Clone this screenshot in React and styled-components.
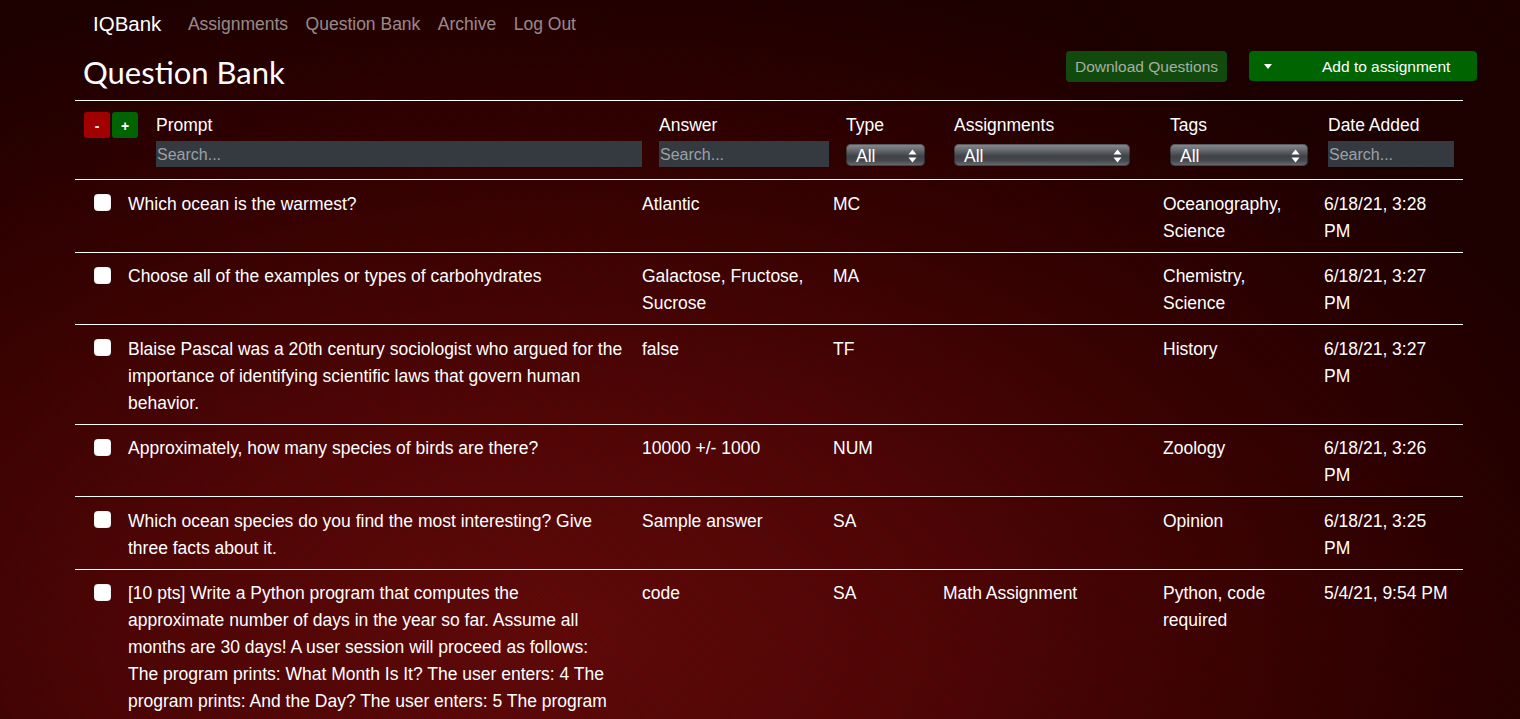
import React from "react";
import styled, { createGlobalStyle } from "styled-components";

const Global = createGlobalStyle`
  html, body { margin: 0; padding: 0; }
  body {
    font-family: "Liberation Sans", Arial, sans-serif;
    color: #fff;
    background-color: #2a0101;
    background-image:
      repeating-linear-gradient(45deg, rgba(0,0,0,0.07) 0px, rgba(0,0,0,0.07) 1px, transparent 1px, transparent 3px),
      radial-gradient(ellipse 75% 95% at 36% 88%, #610909 0%, #500505 35%, #340101 70%, #1d0000 100%);
    background-attachment: fixed;
  }
  #root { height: 719px; overflow: hidden; }
  * { box-sizing: border-box; }
`;

const Page = styled.div`
  padding-left: 75px;
  width: 1477px;
`;

const Nav = styled.nav`
  display: flex;
  align-items: center;
  height: 46px;
  padding-left: 18px;
  padding-top: 2px;
  gap: 17.5px;
`;

const Brand = styled.span`
  font-size: 20.5px;
  color: #fff;
  margin-right: 9px;
`;

const NavLink = styled.a`
  font-size: 17.5px;
  color: rgba(255, 255, 255, 0.55);
  text-decoration: none;
`;

const TitleRow = styled.div`
  display: flex;
  justify-content: space-between;
  align-items: flex-start;
  height: 54px;
`;

const Title = styled.h1`
  margin: 0;
  padding-left: 8px;
  padding-top: 6px;
  font-family: Lato, "Liberation Sans", sans-serif;
  font-weight: 400;
  font-size: 31px;
  line-height: 40px;
`;

const Actions = styled.div`
  display: flex;
  gap: 22px;
  padding-top: 5px;
`;

const Button = styled.button`
  font-family: "Liberation Sans", Arial, sans-serif;
  font-size: 15.5px;
  border: none;
  border-radius: 4px;
  height: ${(p) => (p.$primary ? "30px" : "31px")};
  width: ${(p) => p.$w}px;
  background: ${(p) => (p.$primary ? "#006400" : "#114a0c")};
  color: ${(p) => (p.$primary ? "#fff" : "#a8aea6")};
  display: flex;
  align-items: center;
  justify-content: ${(p) => (p.$primary ? "flex-start" : "center")};
  padding: 1px ${(p) => (p.$primary ? "12px" : "0")} 0;
`;

const Caret = styled.span`
  width: 0;
  height: 0;
  border-left: 4.5px solid transparent;
  border-right: 4.5px solid transparent;
  border-top: 5px solid #fff;
  margin-left: 3px;
  margin-right: 50px;
`;

const HeadRow = styled.div`
  display: grid;
  grid-template-columns: 81px 503px 187px 108px 216px 158px 135px;
  border-top: 1px solid #fff;
  border-bottom: 1px solid #fff;
  padding: 10px 0 12px;
  width: 1388px;
`;

const HeadCell = styled.div`
  display: flex;
  flex-direction: column;
  gap: 3px;
`;

const Label = styled.div`
  font-size: 17.5px;
  line-height: 27px;
  padding-top: 1px;
  height: 27px;
`;

const Control = styled.div`
  height: 26px;
  display: flex;
  align-items: center;
`;

const Search = styled.input`
  width: ${(p) => p.$w}px;
  height: 26px;
  border: none;
  outline: none;
  background: #343a40;
  color: #fff;
  font-family: "Liberation Sans", Arial, sans-serif;
  font-size: 16px;
  padding: 2px 1px 0;
  &::placeholder { color: #9aa0a6; }
`;

const Select = styled.div`
  width: ${(p) => p.$w}px;
  height: 22px;
  margin-top: 2px;
  border-radius: 5px;
  background: linear-gradient(
    to bottom,
    #8a8d91 0%,
    #6a6d71 25%,
    #3f4246 55%,
    #45484c 75%,
    #6b6e72 100%
  );
  box-shadow: inset 0 0 0 1px rgba(0,0,0,0.35);
  display: flex;
  align-items: center;
  justify-content: space-between;
  padding: 2px 8px 0 10px;
  font-size: 17.5px;
  color: #fff;
`;

const Arrows = () => (
  <svg width="9" height="14" viewBox="0 0 9 14">
    <path d="M4.5 0.5 L8.5 5.5 L0.5 5.5 Z" fill="#fff" />
    <path d="M4.5 13.5 L8.5 8.5 L0.5 8.5 Z" fill="#fff" />
  </svg>
);

const ToggleGroup = styled.div`
  display: flex;
  gap: 2px;
  padding-left: 9px;
  padding-top: 1px;
`;

const Toggle = styled.button`
  width: 26px;
  height: 26px;
  border: none;
  border-radius: 3px;
  background: ${(p) => (p.$add ? "#006400" : "#a00000")};
  color: #fff;
  font-family: "Liberation Sans", Arial, sans-serif;
  font-size: 14px;
  font-weight: 700;
  padding: 2px 0 0;
`;

const Row = styled.div`
  display: grid;
  grid-template-columns: 53px 514px 191px 110px 220px 161px 139px;
  border-bottom: 1px solid #fff;
  padding: 10.5px 0 7px;
  width: 1388px;
  font-size: 17.5px;
  line-height: 27px;
`;

const Cell = styled.div`
  padding-right: ${(p) => (p.$last ? "10px" : "16px")};
`;

const CheckCell = styled.div`
  padding-left: 19px;
  padding-top: 3.5px;
`;

const Check = styled.span`
  display: block;
  width: 17px;
  height: 17px;
  border-radius: 4px;
  background: #fff;
  box-shadow: inset 0 0 1px rgba(0,0,0,0.4);
`;

const rows = [
  {
    prompt: ["Which ocean is the warmest?"],
    answer: "Atlantic",
    type: "MC",
    assignments: "",
    tags: "Oceanography, Science",
    date: "6/18/21, 3:28 PM",
  },
  {
    prompt: ["Choose all of the examples or types of carbohydrates"],
    answer: "Galactose, Fructose, Sucrose",
    type: "MA",
    assignments: "",
    tags: "Chemistry, Science",
    date: "6/18/21, 3:27 PM",
  },
  {
    prompt: [
      "Blaise Pascal was a 20th century sociologist who argued for the importance of identifying scientific laws that govern human behavior.",
    ],
    answer: "false",
    type: "TF",
    assignments: "",
    tags: "History",
    date: "6/18/21, 3:27 PM",
  },
  {
    prompt: ["Approximately, how many species of birds are there?"],
    answer: "10000 +/- 1000",
    type: "NUM",
    assignments: "",
    tags: "Zoology",
    date: "6/18/21, 3:26 PM",
  },
  {
    prompt: [
      "Which ocean species do you find the most interesting? Give three facts about it.",
    ],
    answer: "Sample answer",
    type: "SA",
    assignments: "",
    tags: "Opinion",
    date: "6/18/21, 3:25 PM",
  },
  {
    prompt: [
      "[10 pts] Write a Python program that computes the",
      "approximate number of days in the year so far. Assume all",
      "months are 30 days! A user session will proceed as follows:",
      "The program prints: What Month Is It? The user enters: 4 The",
      "program prints: And the Day? The user enters: 5 The program",
      "prints: It is day 95 of the year.",
    ],
    answer: "code",
    type: "SA",
    assignments: "Math Assignment",
    tags: "Python, code required",
    date: "5/4/21, 9:54 PM",
  },
];

export default function App() {
  return (
    <>
      <Global />
      <Page>
        <Nav>
          <Brand>IQBank</Brand>
          <NavLink>Assignments</NavLink>
          <NavLink>Question Bank</NavLink>
          <NavLink>Archive</NavLink>
          <NavLink>Log Out</NavLink>
        </Nav>
        <TitleRow>
          <Title>Question Bank</Title>
          <Actions>
            <Button $w={161}>Download Questions</Button>
            <Button $primary $w={228}>
              <Caret />
              Add to assignment
            </Button>
          </Actions>
        </TitleRow>
        <HeadRow>
          <ToggleGroup>
            <Toggle>-</Toggle>
            <Toggle $add>+</Toggle>
          </ToggleGroup>
          <HeadCell>
            <Label>Prompt</Label>
            <Control>
              <Search $w={486} placeholder="Search..." />
            </Control>
          </HeadCell>
          <HeadCell>
            <Label>Answer</Label>
            <Control>
              <Search $w={170} placeholder="Search..." />
            </Control>
          </HeadCell>
          <HeadCell>
            <Label>Type</Label>
            <Control>
              <Select $w={79}>
                All <Arrows />
              </Select>
            </Control>
          </HeadCell>
          <HeadCell>
            <Label>Assignments</Label>
            <Control>
              <Select $w={176}>
                All <Arrows />
              </Select>
            </Control>
          </HeadCell>
          <HeadCell>
            <Label>Tags</Label>
            <Control>
              <Select $w={138}>
                All <Arrows />
              </Select>
            </Control>
          </HeadCell>
          <HeadCell>
            <Label>Date Added</Label>
            <Control>
              <Search $w={126} placeholder="Search..." />
            </Control>
          </HeadCell>
        </HeadRow>
        {rows.map((r, i) => (
          <Row key={i}>
            <CheckCell>
              <Check />
            </CheckCell>
            <Cell>
              {r.prompt.map((line, j) => (
                <React.Fragment key={j}>
                  {j > 0 && <br />}
                  {line}
                </React.Fragment>
              ))}
            </Cell>
            <Cell>{r.answer}</Cell>
            <Cell>{r.type}</Cell>
            <Cell>{r.assignments}</Cell>
            <Cell>{r.tags}</Cell>
            <Cell $last>{r.date}</Cell>
          </Row>
        ))}
      </Page>
    </>
  );
}
